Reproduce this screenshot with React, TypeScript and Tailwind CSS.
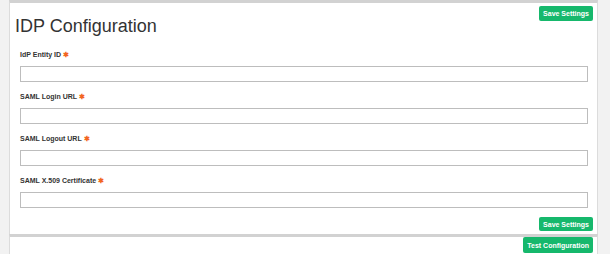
import React from 'react';

const fields = [
  'IdP Entity ID',
  'SAML Login URL',
  'SAML Logout URL',
  'SAML X.509 Certificate',
];

const GreenButton: React.FC<{ label: string; className?: string }> = ({ label, className = '' }) => (
  <button
    className={`bg-[#16b86c] text-white font-bold leading-none rounded-[2px] px-[4px] whitespace-nowrap ${className}`}
  >
    {label}
  </button>
);

const App: React.FC = () => {
  return (
    <div className="w-[610px] h-[254px] overflow-hidden bg-[#f2f2f2] font-['Liberation_Sans',Arial,sans-serif] text-[#333]">
      <div className="ml-[9px] mr-[12px] flex flex-col">
        {/* config card */}
        <div className="bg-white border-t-[3px] border-x border-[#d2d2d2] border-x-[#dcdcdc] h-[234px] flex flex-col px-[10px]">
          <div className="flex justify-between items-start h-[32px]">
            <h1 className="text-[18px] leading-none mt-[14px] ml-[-5px] text-[#333]">IDP Configuration</h1>
            <GreenButton label="Save Settings" className="text-[7px] h-[15px] mt-[3px] mr-[-6px]" />
          </div>
          <div className="mt-[15px] flex flex-col gap-[10px]">
            {fields.map(f => (
              <div key={f} className="flex flex-col">
                <label className="text-[7px] font-bold leading-[9px] h-[9px] text-[#333]">
                  {f} <span className="text-[#f26522]">✱</span>
                </label>
                <input className="mt-[7px] h-[16px] border border-[#bdbdbd] bg-white mr-[-1px]" />
              </div>
            ))}
          </div>
          <div className="flex justify-end mt-[9px]">
            <GreenButton label="Save Settings" className="text-[7px] h-[14px] mr-[-6px]" />
          </div>
        </div>
        {/* test card */}
        <div className="bg-white border-t-[3px] border-x border-[#d2d2d2] border-x-[#dcdcdc] h-[30px] flex justify-end px-[10px]">
          <GreenButton label="Test Configuration" className="text-[7px] h-[16px] mr-[-6px]" />
        </div>
      </div>
    </div>
  );
};

export default App;
